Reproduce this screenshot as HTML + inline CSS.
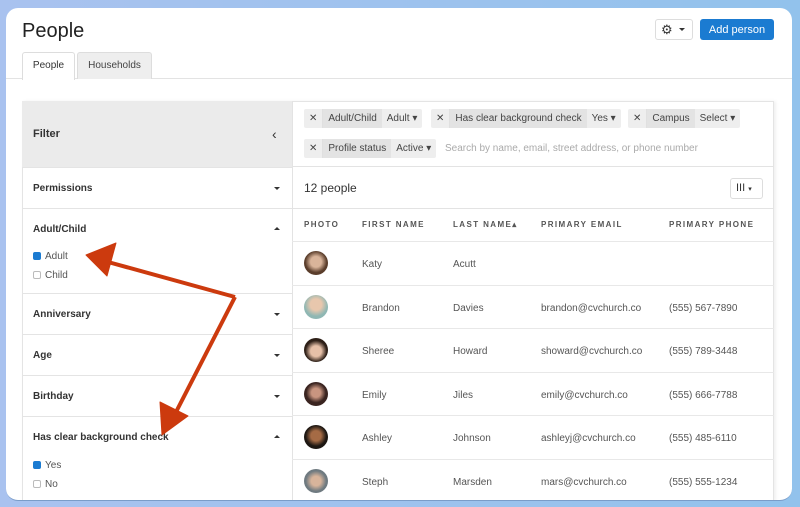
<!DOCTYPE html>
<html><head><style>
*{box-sizing:border-box;margin:0;padding:0}
body{width:800px;height:507px;overflow:hidden;background:linear-gradient(90deg,#a9c2ef,#92c2ec);font-family:"Liberation Sans",sans-serif;position:relative;color:#333}
.panel{position:absolute;left:6px;top:8px;width:786px;height:493px;background:#fff;border-radius:12px;border-bottom:1px solid #7a9cc8;overflow:hidden}
.abs{position:absolute}
h1{position:absolute;left:16px;top:12px;font-size:20px;font-weight:normal;color:#222}
.tab{position:absolute;top:44px;height:27px;font-size:10px;line-height:26px;text-align:center;border:1px solid #ddd;border-bottom:none;border-radius:3px 3px 0 0}
.line{position:absolute;background:#e3e3e3}
.sec{position:absolute;left:16px;width:270px;border-top:1px solid #e4e4e4;font-size:10px;font-weight:bold;color:#333}
.sec span{position:absolute;left:11px}
.caret{position:absolute;right:12px;width:0;height:0;border-left:3px solid transparent;border-right:3px solid transparent}
.dn{border-top:3px solid #333}.up{border-bottom:3px solid #333}
.cb{position:absolute;left:11px;font-size:10px;font-weight:normal;color:#555}
.cb i{display:inline-block;width:8px;height:8px;border:1px solid #bbb;border-radius:2px;margin-right:4px;vertical-align:-1px}
.cb i.on{background:#1b7bd1;border-color:#1b7bd1}
.chip{position:absolute;height:19px;font-size:10px;line-height:19px;background:#eee;border-radius:2px;color:#444;white-space:nowrap}
.chip b{font-weight:normal;display:inline-block;padding:0 5px;border-right:1px solid #e0e0e0}
.chip em{font-style:normal;display:inline-block;padding:0 5px;background:#e3e3e3}
.chip u{text-decoration:none;display:inline-block;padding:0 5px;font-size:10px}
.th{position:absolute;top:212px;font-size:8px;letter-spacing:1.4px;color:#555;font-weight:bold}
.row{position:absolute;left:286px;width:482px;height:43px;border-top:1px solid #e8e8e8;font-size:10px;color:#555}
.row span{position:absolute;top:17px}
.av{position:absolute;left:12px;top:9px;width:24px;height:24px;border-radius:50%}
</style></head><body>
<div class="panel">
<h1>People</h1>
<div class="abs" style="left:649px;top:11px;width:38px;height:21px;border:1px solid #ddd;border-radius:3px;font-size:13px;line-height:19px;padding-left:5px;color:#333">⚙<span style="display:inline-block;margin-left:6px;vertical-align:3px;border-left:3px solid transparent;border-right:3px solid transparent;border-top:3px solid #333"></span></div>
<div class="abs" style="left:694px;top:11px;width:74px;height:21px;background:#1b7bd1;border-radius:3px;color:#fff;font-size:11px;display:flex;align-items:center;justify-content:center">Add person</div>
<div class="line" style="left:0;top:70px;width:786px;height:1px"></div>
<div class="tab" style="left:16px;width:53px;background:#fff;height:28px;color:#333">People</div>
<div class="tab" style="left:71px;width:75px;background:#eee;color:#444">Households</div>
<div class="abs" style="left:16px;top:93px;width:752px;height:400px;border:1px solid #e4e4e4;box-shadow:2px 0 3px rgba(0,0,0,.06)"></div>
<div class="abs" style="left:16px;top:93px;width:270px;height:66px;background:#ebebeb;font-size:11px;font-weight:bold;line-height:66px;padding-left:11px;color:#333">Filter<span style="position:absolute;left:250px;top:0;font-weight:normal;font-size:14px">‹</span></div>
<div class="line" style="left:286px;top:93px;width:1px;height:400px"></div>
<div class="sec" style="top:159px;height:41px"><span style="top:15px">Permissions</span><i class="caret dn" style="top:19px"></i></div>
<div class="sec" style="top:200px;height:85px"><span style="top:15px">Adult/Child</span><i class="caret up" style="top:18px"></i>
<div class="cb" style="top:42px"><i class="on"></i>Adult</div><div class="cb" style="top:61px"><i></i>Child</div></div>
<div class="sec" style="top:285px;height:41px"><span style="top:15px">Anniversary</span><i class="caret dn" style="top:19px"></i></div>
<div class="sec" style="top:326px;height:41px"><span style="top:15px">Age</span><i class="caret dn" style="top:19px"></i></div>
<div class="sec" style="top:367px;height:41px"><span style="top:15px">Birthday</span><i class="caret dn" style="top:19px"></i></div>
<div class="sec" style="top:408px;height:85px"><span style="top:15px">Has clear background check</span><i class="caret up" style="top:18px"></i>
<div class="cb" style="top:43px"><i class="on"></i>Yes</div><div class="cb" style="top:62px"><i></i>No</div></div>
<div class="chip" style="left:298px;top:101px"><b>✕</b><em>Adult/Child</em><u>Adult ▾</u></div>
<div class="chip" style="left:425px;top:101px"><b>✕</b><em>Has clear background check</em><u>Yes ▾</u></div>
<div class="chip" style="left:622px;top:101px"><b>✕</b><em>Campus</em><u>Select ▾</u></div>
<div class="chip" style="left:298px;top:131px"><b>✕</b><em>Profile status</em><u>Active ▾</u></div>
<div class="abs" style="left:439px;top:135px;font-size:10px;color:#aaa">Search by name, email, street address, or phone number</div>
<div class="line" style="left:286px;top:158px;width:482px;height:1px"></div>
<div class="abs" style="left:298px;top:173px;font-size:12px;color:#333">12 people</div>
<div class="abs" style="left:724px;top:170px;width:33px;height:21px;border:1px solid #ddd;border-radius:3px;font-size:11px;line-height:19px;padding-left:5px">III <span style="font-size:7px">▾</span></div>
<div class="line" style="left:286px;top:200px;width:482px;height:1px"></div>
<div class="th" style="left:298px">PHOTO</div><div class="th" style="left:356px">FIRST NAME</div><div class="th" style="left:447px">LAST NAME▴</div><div class="th" style="left:535px">PRIMARY EMAIL</div><div class="th" style="left:663px">PRIMARY PHONE</div>
<div class="row" style="top:233px"><i class="av" style="background:radial-gradient(circle at 50% 45%,#d9b49a 30%,#5a3d2b 60%)"></i><span style="left:70px">Katy</span><span style="left:161px">Acutt</span></div>
<div class="row" style="top:277px"><i class="av" style="background:radial-gradient(circle at 50% 40%,#e8c7ad 30%,#8fb7b3 62%)"></i><span style="left:70px">Brandon</span><span style="left:161px">Davies</span><span style="left:249px">brandon@cvchurch.co</span><span style="left:377px">(555) 567-7890</span></div>
<div class="row" style="top:320px"><i class="av" style="background:radial-gradient(circle at 50% 55%,#e6c0a8 30%,#2d1f17 60%)"></i><span style="left:70px">Sheree</span><span style="left:161px">Howard</span><span style="left:249px">showard@cvchurch.co</span><span style="left:377px">(555) 789-3448</span></div>
<div class="row" style="top:364px"><i class="av" style="background:radial-gradient(circle at 50% 45%,#c99580 25%,#3a2420 55%)"></i><span style="left:70px">Emily</span><span style="left:161px">Jiles</span><span style="left:249px">emily@cvchurch.co</span><span style="left:377px">(555) 666-7788</span></div>
<div class="row" style="top:407px"><i class="av" style="background:radial-gradient(circle at 50% 45%,#a56b45 28%,#1d1712 58%)"></i><span style="left:70px">Ashley</span><span style="left:161px">Johnson</span><span style="left:249px">ashleyj@cvchurch.co</span><span style="left:377px">(555) 485-6110</span></div>
<div class="row" style="top:451px"><i class="av" style="background:radial-gradient(circle at 50% 50%,#d8b49b 28%,#6f7a80 60%)"></i><span style="left:70px">Steph</span><span style="left:161px">Marsden</span><span style="left:249px">mars@cvchurch.co</span><span style="left:377px">(555) 555-1234</span></div>
</div>
<svg class="abs" style="left:0;top:0" width="800" height="507">
<g fill="#cc3a0e" stroke="#cc3a0e" stroke-width="4" stroke-linejoin="round">
<line x1="235" y1="297" x2="108" y2="262"/>
<line x1="235" y1="297" x2="175" y2="414"/>
<polygon points="86,255 116,243 107,276" stroke-width="1"/>
<polygon points="162,435 160,402 188,416" stroke-width="1"/>
</g></svg>
</body></html>
